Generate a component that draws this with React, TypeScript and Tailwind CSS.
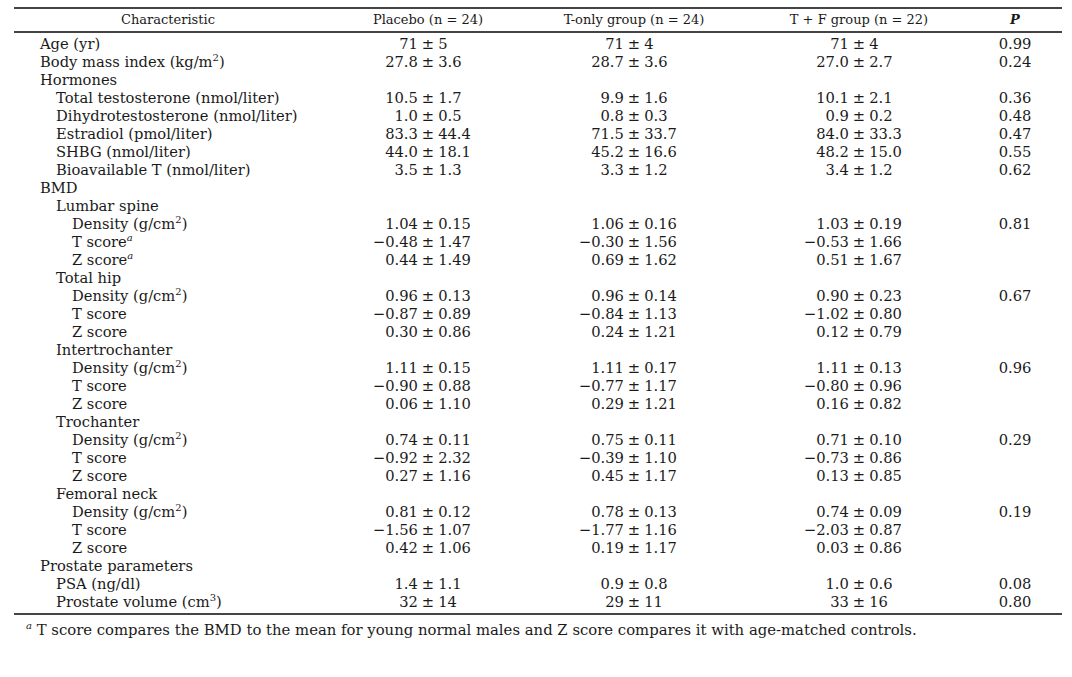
import React from "react";

type Row = {
  label: React.ReactNode;
  level: number;
  vals?: [string, string, string];
  p?: string;
};

const sup2 = <sup className="text-[10px] relative -top-[6px]">2</sup>;
const sup3 = <sup className="text-[10px] relative -top-[6px]">3</sup>;
const supA = <sup className="text-[10px] italic relative -top-[6px]">a</sup>;

const rows: Row[] = [
  { label: "Age (yr)", level: 0, vals: ["71 ± 5", "71 ± 4", "71 ± 4"], p: "0.99" },
  { label: <>Body mass index (kg/m{sup2})</>, level: 0, vals: ["27.8 ± 3.6", "28.7 ± 3.6", "27.0 ± 2.7"], p: "0.24" },
  { label: "Hormones", level: 0 },
  { label: "Total testosterone (nmol/liter)", level: 1, vals: ["10.5 ± 1.7", "9.9 ± 1.6", "10.1 ± 2.1"], p: "0.36" },
  { label: "Dihydrotestosterone (nmol/liter)", level: 1, vals: ["1.0 ± 0.5", "0.8 ± 0.3", "0.9 ± 0.2"], p: "0.48" },
  { label: "Estradiol (pmol/liter)", level: 1, vals: ["83.3 ± 44.4", "71.5 ± 33.7", "84.0 ± 33.3"], p: "0.47" },
  { label: "SHBG (nmol/liter)", level: 1, vals: ["44.0 ± 18.1", "45.2 ± 16.6", "48.2 ± 15.0"], p: "0.55" },
  { label: "Bioavailable T (nmol/liter)", level: 1, vals: ["3.5 ± 1.3", "3.3 ± 1.2", "3.4 ± 1.2"], p: "0.62" },
  { label: "BMD", level: 0 },
  { label: "Lumbar spine", level: 1 },
  { label: <>Density (g/cm{sup2})</>, level: 2, vals: ["1.04 ± 0.15", "1.06 ± 0.16", "1.03 ± 0.19"], p: "0.81" },
  { label: <>T score{supA}</>, level: 2, vals: ["−0.48 ± 1.47", "−0.30 ± 1.56", "−0.53 ± 1.66"] },
  { label: <>Z score{supA}</>, level: 2, vals: ["0.44 ± 1.49", "0.69 ± 1.62", "0.51 ± 1.67"] },
  { label: "Total hip", level: 1 },
  { label: <>Density (g/cm{sup2})</>, level: 2, vals: ["0.96 ± 0.13", "0.96 ± 0.14", "0.90 ± 0.23"], p: "0.67" },
  { label: "T score", level: 2, vals: ["−0.87 ± 0.89", "−0.84 ± 1.13", "−1.02 ± 0.80"] },
  { label: "Z score", level: 2, vals: ["0.30 ± 0.86", "0.24 ± 1.21", "0.12 ± 0.79"] },
  { label: "Intertrochanter", level: 1 },
  { label: <>Density (g/cm{sup2})</>, level: 2, vals: ["1.11 ± 0.15", "1.11 ± 0.17", "1.11 ± 0.13"], p: "0.96" },
  { label: "T score", level: 2, vals: ["−0.90 ± 0.88", "−0.77 ± 1.17", "−0.80 ± 0.96"] },
  { label: "Z score", level: 2, vals: ["0.06 ± 1.10", "0.29 ± 1.21", "0.16 ± 0.82"] },
  { label: "Trochanter", level: 1 },
  { label: <>Density (g/cm{sup2})</>, level: 2, vals: ["0.74 ± 0.11", "0.75 ± 0.11", "0.71 ± 0.10"], p: "0.29" },
  { label: "T score", level: 2, vals: ["−0.92 ± 2.32", "−0.39 ± 1.10", "−0.73 ± 0.86"] },
  { label: "Z score", level: 2, vals: ["0.27 ± 1.16", "0.45 ± 1.17", "0.13 ± 0.85"] },
  { label: "Femoral neck", level: 1 },
  { label: <>Density (g/cm{sup2})</>, level: 2, vals: ["0.81 ± 0.12", "0.78 ± 0.13", "0.74 ± 0.09"], p: "0.19" },
  { label: "T score", level: 2, vals: ["−1.56 ± 1.07", "−1.77 ± 1.16", "−2.03 ± 0.87"] },
  { label: "Z score", level: 2, vals: ["0.42 ± 1.06", "0.19 ± 1.17", "0.03 ± 0.86"] },
  { label: "Prostate parameters", level: 0 },
  { label: "PSA (ng/dl)", level: 1, vals: ["1.4 ± 1.1", "0.9 ± 0.8", "1.0 ± 0.6"], p: "0.08" },
  { label: <>Prostate volume (cm{sup3})</>, level: 1, vals: ["32 ± 14", "29 ± 11", "33 ± 16"], p: "0.80" },
];

const indent = ["pl-[26px]", "pl-[42px]", "pl-[58px]"];

const Val = ({ v }: { v: string }) => {
  const [a, b] = v.split(" ± ");
  return (
    <div className="flex justify-center">
      <span className="w-[62px] text-right">{a}</span>
      <span className="px-[4px]">±</span>
      <span className="w-[62px] text-left">{b}</span>
    </div>
  );
};

const cols = "grid grid-cols-[324px_180px_232px_218px_94px]";

export default function App() {
  return (
    <div
      className="w-[1072px] h-[677px] bg-white text-[#1a1a1a] pt-[7px] pl-[14px]"
      style={{ fontFamily: '"DejaVu Serif", "Liberation Serif", serif' }}
    >
      <div className="w-[1048px]">
        <div className={`${cols} border-t-2 border-b-2 border-[#444] h-[26px] items-center text-[13px]`}>
          <div className="text-center pr-[16px]">Characteristic</div>
          <div className="text-center">Placebo (n = 24)</div>
          <div className="text-center">T-only group (n = 24)</div>
          <div className="text-center">T + F group (n = 22)</div>
          <div className="text-center italic font-bold">P</div>
        </div>
        <div className="pt-[2px] pb-[2px] border-b-2 border-[#444] text-[14.7px] leading-[18px]">
          {rows.map((r, i) => (
            <div key={i} className={`${cols} h-[18px]`}>
              <div className={`${indent[r.level]} whitespace-nowrap`}>{r.label}</div>
              {r.vals ? r.vals.map((v, j) => <Val key={j} v={v} />) : [0, 1, 2].map((j) => <div key={j} />)}
              <div className="text-center">{r.p ?? ""}</div>
            </div>
          ))}
        </div>
        <div className="pl-[12px] pt-[6px] text-[14.85px] leading-[18px]">
          <sup className="text-[10px] italic relative -top-[6px]">a</sup> T score compares the BMD to the mean for young normal males and Z score compares it with age-matched controls.
        </div>
      </div>
    </div>
  );
}
